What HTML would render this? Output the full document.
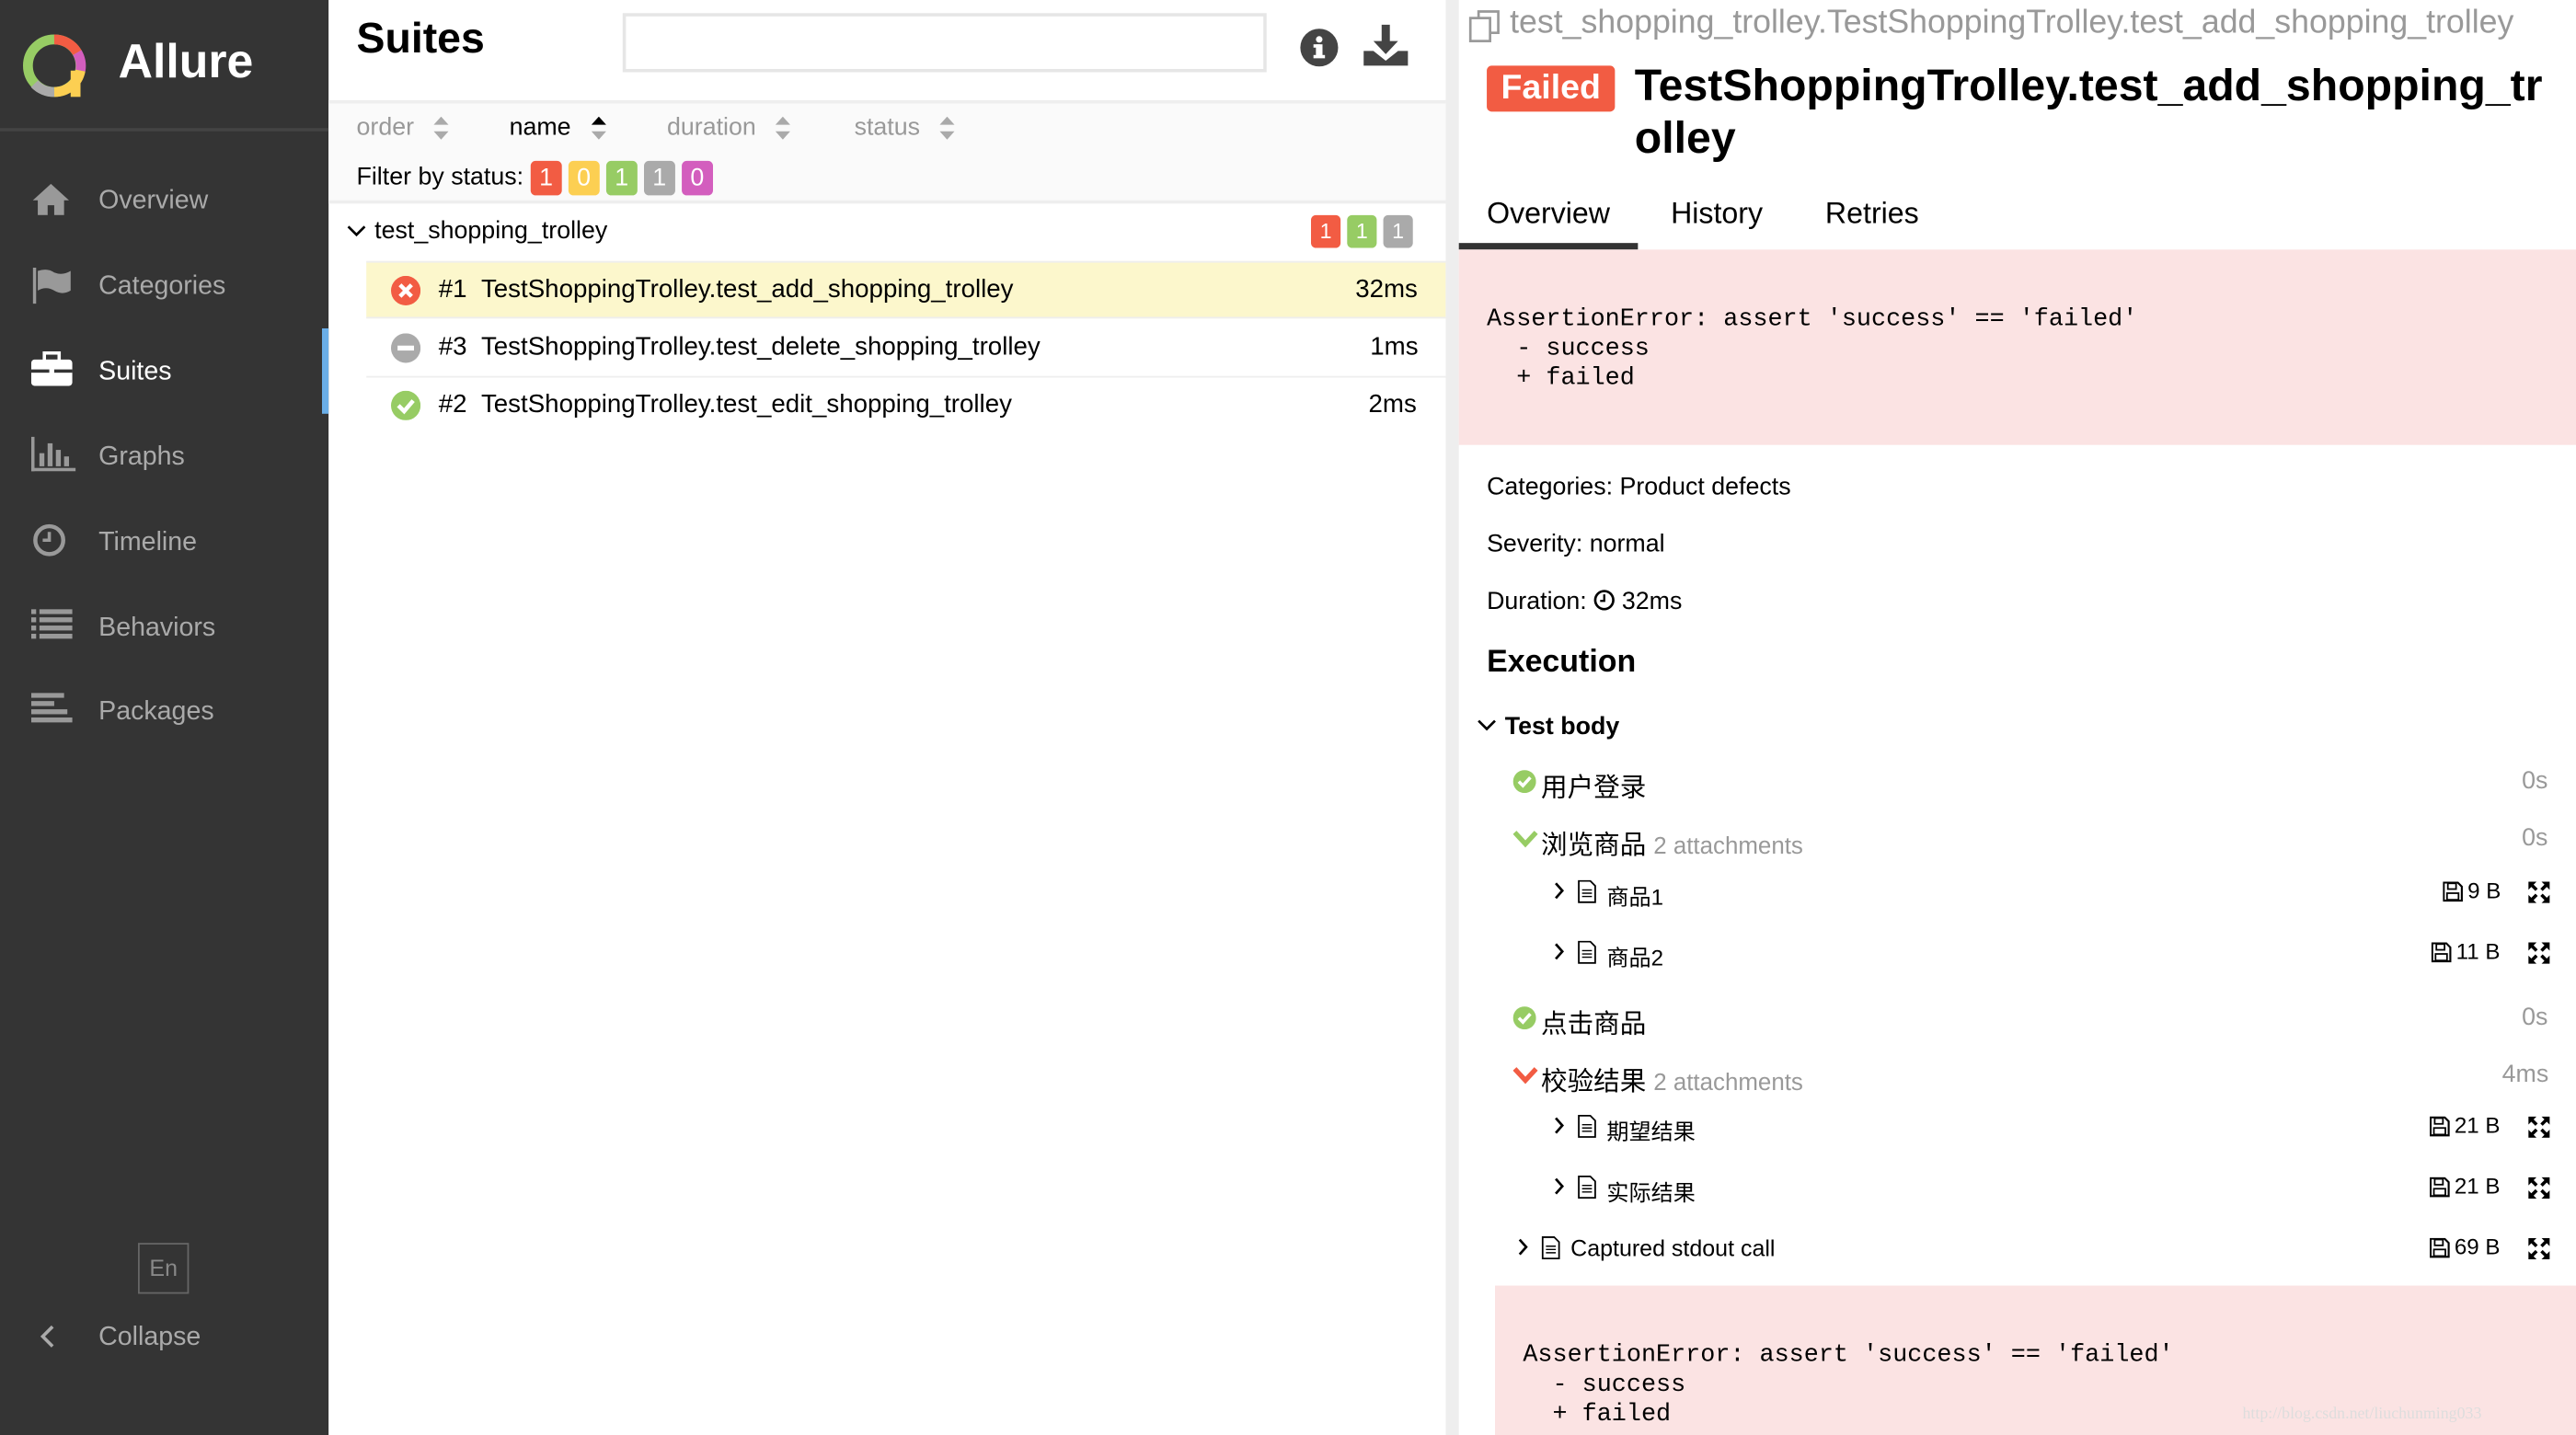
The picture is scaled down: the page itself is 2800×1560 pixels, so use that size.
<!DOCTYPE html>
<html><head><meta charset="utf-8"><style>
*{margin:0;padding:0;box-sizing:border-box}
html,body{width:2800px;height:1560px;overflow:hidden;background:#fff}
#w{position:absolute;left:0;top:0;width:1568px;height:874px;transform:scale(1.78571,1.7849);transform-origin:0 0;font-family:"Liberation Sans","Noto Sans CJK SC",sans-serif;color:#000}
.a{position:absolute;white-space:nowrap}
.side{left:0;top:0;width:200px;height:874px;background:#343434}
.nav{left:60px;font-size:16px;color:#aaa}
.b{display:inline-block;min-width:19px;text-align:center;height:21px;line-height:21px;padding:0 3px;border-radius:3px;color:#fff;font-size:15px;margin-right:4px;vertical-align:middle}
.r{background:#f25c43}.y{background:#fccf52}.g{background:#97cc64}.gr{background:#aaa}.p{background:#d35ebe}
.mono{font-family:"Liberation Mono",monospace;font-size:15px}
.t15{font-size:15px}
.t16{font-size:15.5px}
.gray{color:#999}
.srt{display:inline-block;vertical-align:middle;margin-left:12px}
</style></head><body><div id="w">
<div class="a side"></div>
<svg class="a" style="left:12px;top:19px" width="42" height="42" viewBox="0 0 42 42"><circle cx="21" cy="21" r="16" fill="none" stroke="#97cc64" stroke-width="6"/><path d="M21 5 A16 16 0 0 1 35 13" fill="none" stroke="#f25c43" stroke-width="6"/><path d="M35 13 A16 16 0 0 1 37 24" fill="none" stroke="#d35ebe" stroke-width="6"/><path d="M37 24 A16 16 0 0 1 21 37" fill="none" stroke="#fccf52" stroke-width="6"/><path d="M21 37 A16 16 0 0 1 9 32" fill="none" stroke="#aaa" stroke-width="6"/><rect x="31" y="24" width="6" height="16" fill="#fccf52"/></svg>
<div class="a" style="left:72px;top:22px;font-size:29px;font-weight:bold;color:#fff">Allure</div>
<div class="a" style="left:0;top:78px;width:200px;height:2px;background:#444"></div>
<svg class="a" style="left:19px;top:111px" width="24" height="20"><path d="M12 1 L1 11 H4 V20 H10 V14 H14 V20 H20 V11 H23 Z" fill="#999"/></svg>
<div class="a nav" style="top:114px">Overview</div>
<svg class="a" style="left:20px;top:163px" width="24" height="22"><rect x="0" y="0" width="2" height="22" fill="#999"/><path d="M3 2 Q9 0 13 3 Q18 5 23 2 V14 Q18 17 13 14 Q8 11 3 14Z" fill="#999"/></svg>
<div class="a nav" style="top:166px">Categories</div>
<div class="a" style="left:196px;top:200px;width:4px;height:52px;background:#6aaee8"></div>
<svg class="a" style="left:19px;top:214px" width="26" height="22"><rect x="0" y="5" width="25" height="16" rx="2" fill="#fff"/><rect x="8" y="1" width="9" height="5" fill="none" stroke="#fff" stroke-width="2"/><rect x="0" y="11" width="25" height="2" fill="#343434"/><rect x="11" y="10" width="3" height="4" fill="#fff"/></svg>
<div class="a nav" style="top:218px;color:#fff">Suites</div>
<svg class="a" style="left:19px;top:266px" width="28" height="22"><rect x="0" y="0" width="2" height="21" fill="#999"/><rect x="0" y="19" width="27" height="2" fill="#999"/><rect x="5" y="10" width="3" height="8" fill="#999"/><rect x="10" y="4" width="3" height="14" fill="#999"/><rect x="15" y="8" width="3" height="10" fill="#999"/><rect x="20" y="12" width="3" height="6" fill="#999"/></svg>
<div class="a nav" style="top:270px">Graphs</div>
<svg class="a" style="left:20px;top:319px" width="22" height="22"><circle cx="10" cy="10" r="8.5" fill="none" stroke="#999" stroke-width="2.5"/><path d="M10 5 V10 H6" fill="none" stroke="#999" stroke-width="2"/></svg>
<div class="a nav" style="top:322px">Timeline</div>
<svg class="a" style="left:19px;top:371px" width="26" height="20"><g fill="#999"><rect x="0" y="0" width="3" height="3"/><rect x="5" y="0" width="20" height="3"/><rect x="0" y="5" width="3" height="3"/><rect x="5" y="5" width="20" height="3"/><rect x="0" y="10" width="3" height="3"/><rect x="5" y="10" width="20" height="3"/><rect x="0" y="15" width="3" height="3"/><rect x="5" y="15" width="20" height="3"/></g></svg>
<div class="a nav" style="top:374px">Behaviors</div>
<svg class="a" style="left:19px;top:422px" width="26" height="20"><g fill="#999"><rect x="0" y="0" width="20" height="3"/><rect x="0" y="5" width="14" height="3"/><rect x="0" y="10" width="22" height="3"/><rect x="0" y="15" width="25" height="3"/></g></svg>
<div class="a nav" style="top:425px">Packages</div>
<div class="a" style="left:84px;top:757px;width:31px;height:31px;border:1px solid #666;color:#888;font-size:14px;text-align:center;line-height:29px">En</div>
<svg class="a" style="left:24px;top:807px" width="10" height="14"><path d="M8 1 L2 7 L8 13" fill="none" stroke="#aaa" stroke-width="2"/></svg>
<div class="a nav" style="top:806px">Collapse</div>

<!-- center -->
<div class="a" style="left:217px;top:8px;font-size:26px;font-weight:bold">Suites</div>
<div class="a" style="left:379px;top:8px;width:392px;height:36px;border:2px solid #e6e6e6"></div>
<svg class="a" style="left:791px;top:17px" width="24" height="24"><circle cx="12" cy="12" r="11.5" fill="#444"/><rect x="10" y="10" width="4" height="8" fill="#fff"/><rect x="8.5" y="10" width="4" height="2" fill="#fff"/><rect x="8.5" y="16.5" width="7" height="2" fill="#fff"/><circle cx="12" cy="7" r="2" fill="#fff"/></svg>
<svg class="a" style="left:830px;top:15px" width="28" height="26"><path d="M11 0 H16 V10 H21 L13.5 18 L6 10 H11Z" fill="#444"/><path d="M0 16 H6 L13.5 22 L21 16 H27 V25 H0Z" fill="#444"/></svg>
<div class="a" style="left:200px;top:61px;width:680px;height:63px;background:#fafafa;border-top:2px solid #eee;border-bottom:2px solid #eee"></div>
<div class="a t15 gray" style="left:217px;top:69px">order<svg class="srt" width="9" height="14"><path d="M4.5 0 L9 5 H0Z M4.5 14 L9 9 H0Z" fill="#aaa"/></svg></div>
<div class="a t15" style="left:310px;top:69px">name<svg class="srt" width="9" height="14"><path d="M4.5 0 L9 5 H0Z" fill="#000"/><path d="M4.5 14 L9 9 H0Z" fill="#aaa"/></svg></div>
<div class="a t15 gray" style="left:406px;top:69px">duration<svg class="srt" width="9" height="14"><path d="M4.5 0 L9 5 H0Z M4.5 14 L9 9 H0Z" fill="#aaa"/></svg></div>
<div class="a t15 gray" style="left:520px;top:69px">status<svg class="srt" width="9" height="14"><path d="M4.5 0 L9 5 H0Z M4.5 14 L9 9 H0Z" fill="#aaa"/></svg></div>
<div class="a t15" style="left:217px;top:98px">Filter by status: <span class="b r">1</span><span class="b y">0</span><span class="b g">1</span><span class="b gr">1</span><span class="b p">0</span></div>
<svg class="a" style="left:211px;top:137px" width="12" height="8"><path d="M1 1 L6 6 L11 1" fill="none" stroke="#000" stroke-width="1.5"/></svg>
<div class="a t15" style="left:228px;top:132px">test_shopping_trolley</div>
<div class="a" style="left:798px;top:131px"><span class="b r" style="min-width:18px;height:20px;line-height:20px;font-size:13px">1</span><span class="b g" style="min-width:18px;height:20px;line-height:20px;font-size:13px">1</span><span class="b gr" style="min-width:18px;height:20px;line-height:20px;font-size:13px">1</span></div>
<div class="a" style="left:223px;top:159px;width:657px;height:35px;background:#fcf7cc;border-top:1px solid #eee;border-bottom:1px solid #eee"></div>
<div class="a" style="left:223px;top:229px;width:657px;height:1px;background:#eee"></div>
<svg class="a" style="left:238px;top:168px" width="18" height="18"><circle cx="9" cy="9" r="9" fill="#f25c43"/><path d="M5.5 5.5 L12.5 12.5 M12.5 5.5 L5.5 12.5" stroke="#fff" stroke-width="2.5"/></svg>
<div class="a t16" style="left:267px;top:168px">#1&nbsp;&nbsp;TestShoppingTrolley.test_add_shopping_trolley</div>
<div class="a t16" style="left:825px;top:168px">32ms</div>
<svg class="a" style="left:238px;top:203px" width="18" height="18"><circle cx="9" cy="9" r="9" fill="#aaa"/><rect x="4" y="7.5" width="10" height="3" fill="#fff"/></svg>
<div class="a t16" style="left:267px;top:203px">#3&nbsp;&nbsp;TestShoppingTrolley.test_delete_shopping_trolley</div>
<div class="a t16" style="left:834px;top:203px">1ms</div>
<svg class="a" style="left:238px;top:238px" width="18" height="18"><circle cx="9" cy="9" r="9" fill="#97cc64"/><path d="M4.5 9 L8 12.5 L13.5 6" fill="none" stroke="#fff" stroke-width="2.5"/></svg>
<div class="a t16" style="left:267px;top:238px">#2&nbsp;&nbsp;TestShoppingTrolley.test_edit_shopping_trolley</div>
<div class="a t16" style="left:833px;top:238px">2ms</div>

<div class="a" style="left:880px;top:0;width:8px;height:874px;background:#eee"></div>

<!-- right -->
<svg class="a" style="left:894px;top:6px" width="20" height="20"><rect x="1" y="5" width="12" height="14" fill="none" stroke="#999" stroke-width="1.5"/><path d="M6 5 V1 H18 V14 H13" fill="none" stroke="#999" stroke-width="1.5"/></svg>
<div class="a" style="left:919px;top:3px;font-size:20px;color:#999">test_shopping_trolley.TestShoppingTrolley.test_add_shopping_trolley</div>
<div class="a" style="left:905px;top:40px;width:78px;height:28px;background:#f25c43;border-radius:3px;color:#fff;font-size:21px;font-weight:bold;text-align:center;line-height:28px">Failed</div>
<div class="a" style="left:995px;top:36px;font-size:27px;font-weight:bold;line-height:32px;white-space:normal;width:560px;word-break:break-all">TestShoppingTrolley.test_add_shopping_tr olley</div>
<div class="a" style="left:905px;top:120px;font-size:18px">Overview</div>
<div class="a" style="left:1017px;top:120px;font-size:18px">History</div>
<div class="a" style="left:1111px;top:120px;font-size:18px">Retries</div>
<div class="a" style="left:888px;top:148px;width:109px;height:4px;background:#333"></div>
<div class="a" style="left:888px;top:152px;width:680px;height:119px;background:#fbe3e3"></div>
<div class="a mono" style="left:905px;top:186px;line-height:18px;white-space:pre">AssertionError: assert 'success' == 'failed'
  - success
  + failed</div>
<div class="a t15" style="left:905px;top:288px">Categories: Product defects</div>
<div class="a t15" style="left:905px;top:323px">Severity: normal</div>
<div class="a t15" style="left:905px;top:358px">Duration: <svg width="13" height="13" style="vertical-align:-1px"><circle cx="6.5" cy="6.5" r="5.5" fill="none" stroke="#000" stroke-width="1.5"/><path d="M6.5 3 V7 H4" fill="none" stroke="#000" stroke-width="1.3"/></svg> 32ms</div>
<div class="a" style="left:905px;top:393px;font-size:19px;font-weight:bold">Execution</div>
<svg class="a" style="left:899px;top:438px" width="12" height="8"><path d="M1 1 L6 6 L11 1" fill="none" stroke="#000" stroke-width="1.5"/></svg>
<div class="a t15" style="left:916px;top:434px;font-weight:bold">Test body</div>

<svg class="a" style="left:921px;top:469px" width="14" height="14"><circle cx="7" cy="7" r="7" fill="#97cc64"/><path d="M3.5 7 L6 9.5 L10.5 4.5" fill="none" stroke="#fff" stroke-width="2"/></svg>
<div class="a" style="left:938px;top:466px;font-size:16px">用户登录</div>
<div class="a t15 gray" style="left:1535px;top:467px">0s</div>
<svg class="a" style="left:921px;top:505px" width="15" height="12"><path d="M1 2 L7.5 9 L14 2" fill="none" stroke="#97cc64" stroke-width="3"/></svg>
<div class="a" style="left:938px;top:501px;font-size:16px">浏览商品 <span class="gray" style="font-size:14.5px">2 attachments</span></div>
<div class="a t15 gray" style="left:1535px;top:502px">0s</div>

<!-- attachment rows -->
<svg width="0" height="0" style="position:absolute"><defs>
<g id="chev"><path d="M1 1 L5 5.5 L1 10" fill="none" stroke="#000" stroke-width="1.5"/></g>
<g id="doc"><path d="M1 0.5 H8 L11 3.5 V13.5 H1Z" fill="none" stroke="#000"/><path d="M3 6 H9 M3 8 H9 M3 10 H9" stroke="#000" stroke-width="0.8"/></g>
<g id="disk"><path d="M0.5 0.5 H9 L11.5 3 V11.5 H0.5Z" fill="none" stroke="#000" stroke-width="1.2"/><rect x="3" y="1" width="5" height="3.5" fill="none" stroke="#000"/><rect x="2.5" y="7" width="7" height="4" fill="none" stroke="#000"/></g>
<g id="exp"><path d="M1 1 L5 5 M12 1 L8 5 M1 12 L5 8 M12 12 L8 8" stroke="#000" stroke-width="2"/><path d="M0 0 H5 L0 5Z M13 0 H8 L13 5Z M0 13 H5 L0 8Z M13 13 H8 L13 8Z" fill="#000"/></g>
</defs></svg>

<svg class="a" style="left:946px;top:537px" width="7" height="12"><use href="#chev"/></svg>
<svg class="a" style="left:960px;top:536px" width="13" height="15"><use href="#doc"/></svg>
<div class="a" style="left:978px;top:535px;font-size:13.5px">商品1</div>
<svg class="a" style="left:1487px;top:537px" width="13" height="13"><use href="#disk"/></svg>
<div class="a" style="left:1502px;top:535px;font-size:13.5px">9 B</div>
<svg class="a" style="left:1539px;top:537px" width="13" height="13"><use href="#exp"/></svg>

<svg class="a" style="left:946px;top:574px" width="7" height="12"><use href="#chev"/></svg>
<svg class="a" style="left:960px;top:573px" width="13" height="15"><use href="#doc"/></svg>
<div class="a" style="left:978px;top:572px;font-size:13.5px">商品2</div>
<svg class="a" style="left:1480px;top:574px" width="13" height="13"><use href="#disk"/></svg>
<div class="a" style="left:1495px;top:572px;font-size:13.5px">11 B</div>
<svg class="a" style="left:1539px;top:574px" width="13" height="13"><use href="#exp"/></svg>

<svg class="a" style="left:921px;top:613px" width="14" height="14"><circle cx="7" cy="7" r="7" fill="#97cc64"/><path d="M3.5 7 L6 9.5 L10.5 4.5" fill="none" stroke="#fff" stroke-width="2"/></svg>
<div class="a" style="left:938px;top:610px;font-size:16px">点击商品</div>
<div class="a t15 gray" style="left:1535px;top:611px">0s</div>
<svg class="a" style="left:921px;top:649px" width="15" height="12"><path d="M1 2 L7.5 9 L14 2" fill="none" stroke="#f25c43" stroke-width="3"/></svg>
<div class="a" style="left:938px;top:645px;font-size:16px">校验结果 <span class="gray" style="font-size:14.5px">2 attachments</span></div>
<div class="a t15 gray" style="left:1523px;top:646px">4ms</div>

<svg class="a" style="left:946px;top:680px" width="7" height="12"><use href="#chev"/></svg>
<svg class="a" style="left:960px;top:679px" width="13" height="15"><use href="#doc"/></svg>
<div class="a" style="left:978px;top:678px;font-size:13.5px">期望结果</div>
<svg class="a" style="left:1479px;top:680px" width="13" height="13"><use href="#disk"/></svg>
<div class="a" style="left:1494px;top:678px;font-size:13.5px">21 B</div>
<svg class="a" style="left:1539px;top:680px" width="13" height="13"><use href="#exp"/></svg>

<svg class="a" style="left:946px;top:717px" width="7" height="12"><use href="#chev"/></svg>
<svg class="a" style="left:960px;top:716px" width="13" height="15"><use href="#doc"/></svg>
<div class="a" style="left:978px;top:715px;font-size:13.5px">实际结果</div>
<svg class="a" style="left:1479px;top:717px" width="13" height="13"><use href="#disk"/></svg>
<div class="a" style="left:1494px;top:715px;font-size:13.5px">21 B</div>
<svg class="a" style="left:1539px;top:717px" width="13" height="13"><use href="#exp"/></svg>

<svg class="a" style="left:924px;top:754px" width="7" height="12"><use href="#chev"/></svg>
<svg class="a" style="left:938px;top:753px" width="13" height="15"><use href="#doc"/></svg>
<div class="a" style="left:956px;top:752px;font-size:14px">Captured stdout call</div>
<svg class="a" style="left:1479px;top:754px" width="13" height="13"><use href="#disk"/></svg>
<div class="a" style="left:1494px;top:752px;font-size:13.5px">69 B</div>
<svg class="a" style="left:1539px;top:754px" width="13" height="13"><use href="#exp"/></svg>

<div class="a" style="left:910px;top:783px;width:658px;height:91px;background:#fbe3e3"></div>
<div class="a mono" style="left:927px;top:817px;line-height:18px;white-space:pre">AssertionError: assert 'success' == 'failed'
  - success
  + failed</div>
<div class="a" style="left:1365px;top:856px;font-size:10px;color:#ddd;font-family:'Liberation Serif',serif">http://blog.csdn.net/liuchunming033</div>
</div></body></html>
